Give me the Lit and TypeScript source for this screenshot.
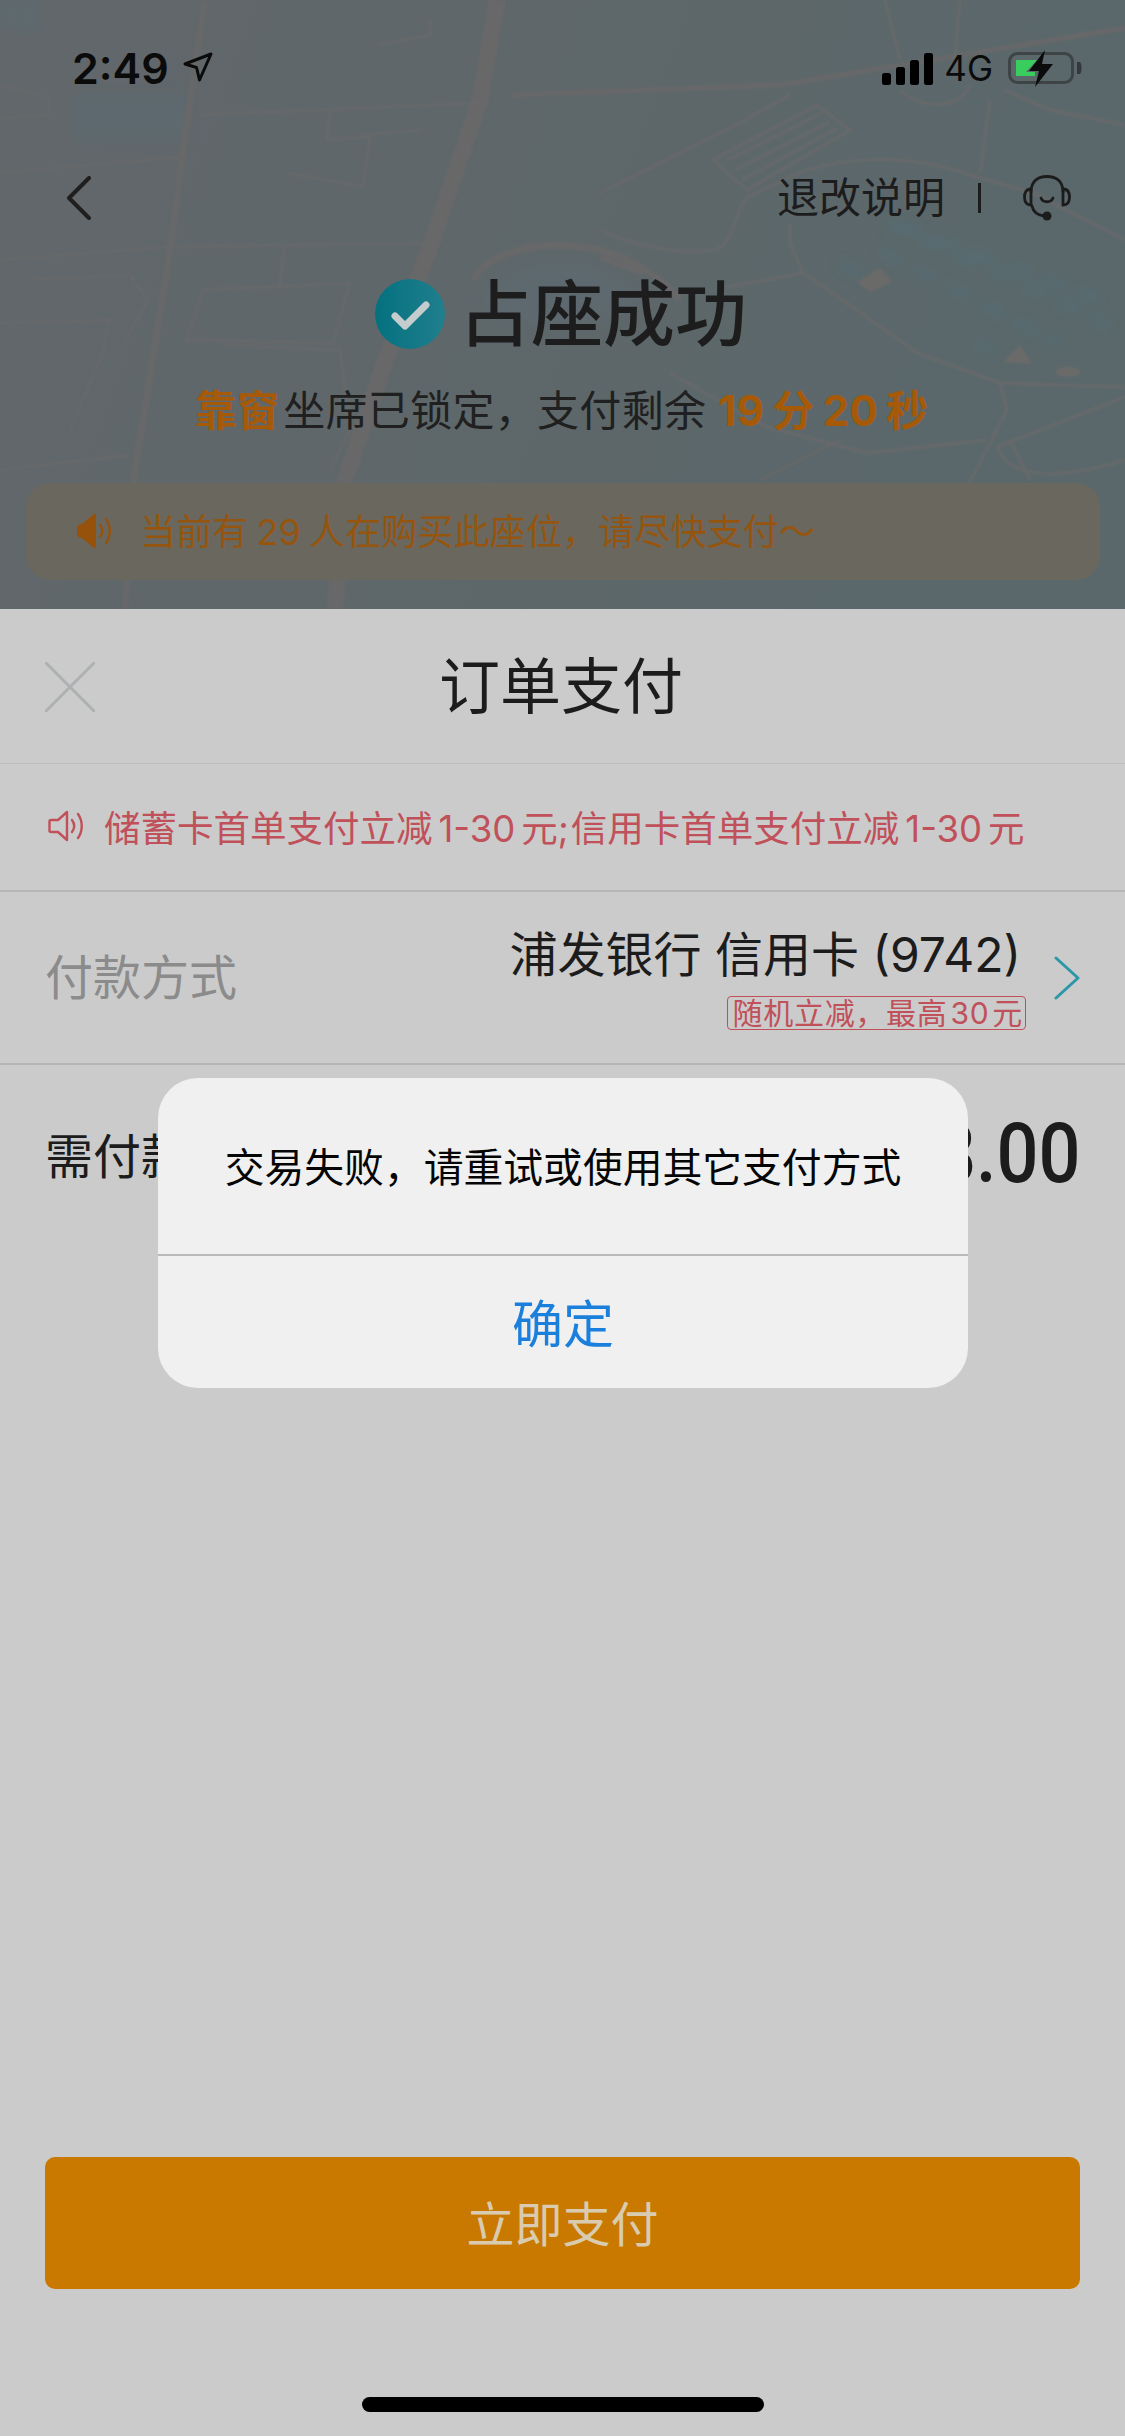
import { css, html, LitElement, svg } from "lit";
import { customElement } from "lit/decorators.js";

const mapLines = svg`
  <defs>
    <linearGradient id="land" x1="0" x2="1" y1="0" y2="0.2">
      <stop offset="0" stop-color="#62676a"/>
      <stop offset="0.55" stop-color="#5e676a"/>
      <stop offset="1" stop-color="#5a686b"/>
    </linearGradient>
    <filter id="soft"><feGaussianBlur stdDeviation="5"/></filter>
    <filter id="soft-line"><feGaussianBlur stdDeviation="0.8"/></filter>
  </defs>
  <rect width="1125" height="609" fill="url(#land)"/>
  <g filter="url(#soft)" fill="#5d696e">
    <rect x="73" y="93" width="114" height="48"/>
    <rect x="0" y="0" width="40" height="30"/>
    <path d="M480 300 C520 250 600 250 640 300 C600 330 520 340 480 300 Z"/>
  </g>
  <g filter="url(#soft)" stroke="#576d74" stroke-width="9" stroke-dasharray="26 12" fill="none" opacity="0.8">
    <path d="M885 222 L1110 325"/>
    <path d="M880 250 L1060 345"/>
    <path d="M900 225 L1100 300"/>
    <path d="M840 262 L868 282"/>
    <path d="M972 342 L1008 358"/>
  </g>
  <g filter="url(#soft-line)" fill="none">
    <g stroke="#676869">
      <path d="M497 0 L480 100 L430 247 L383 367 L345 480 L335 609" stroke-width="17"/>
      <path d="M205 0 L190 100 L170 250 L133 483 L125 609" stroke-width="6"/>
      <path d="M510 95 L780 85 L1125 28" stroke-width="5"/>
      <path d="M600 257 L643 273" stroke-width="6"/>
      <path d="M473 280 C490 250 545 238 600 250 C630 258 660 275 680 300" stroke-width="7"/>
    </g>
    <g stroke="#67696b" stroke-width="2.5">
      <path d="M0 260 L167 247 L433 243"/>
      <path d="M200 115 L480 103"/>
      <path d="M0 173 L180 157"/>
      <path d="M0 85 L50 98 L48 115 L0 118"/>
      <path d="M187 340 L203 290 L350 283 L333 343 Z"/>
      <path d="M0 323 L110 320 L100 360 L70 430"/>
      <path d="M30 280 L130 275 L148 300 L125 340"/>
      <path d="M330 110 L327 140 L370 137 L363 187 L287 173"/>
      <path d="M380 45 L430 35 L430 20"/>
      <path d="M420 130 L360 135"/>
      <path d="M0 470 L130 455"/>
      <path d="M285 245 L280 285 M225 345 L340 350 L350 430 L330 470"/>
    </g>
    <g stroke="#68696a" stroke-width="3">
      <path d="M713 160 L817 105 L850 130 L747 190 Z"/>
      <path d="M728 160 L822 113 M735 170 L830 122 M742 180 L838 128"/>
      <path d="M600 193 L740 123 L790 95"/>
      <path d="M600 230 C630 245 680 255 713 250 C735 245 735 210 747 197 L807 170 C840 160 900 150 977 177 L1033 193 L1125 240"/>
      <path d="M790 223 L790 243 L803 273 L867 317 L917 353 L1000 383 L1125 387"/>
      <path d="M727 287 L803 273"/>
      <path d="M1000 383 L1007 410 L983 457 L960 500"/>
      <path d="M670 373 L767 427 L867 453 L987 440"/>
      <path d="M997 447 L1125 397"/>
      <path d="M990 100 L980 173"/>
      <path d="M900 90 C920 110 960 110 970 85 M885 0 L900 60 M960 0 L955 60 M1005 90 L1050 110 L1125 125"/>
      <path d="M997 447 C1010 480 1060 480 1125 460"/>
      <path d="M760 480 L840 440 M1030 480 L1010 440"/>
    </g>
  </g>
  <g filter="url(#soft-line)" fill="#6a6a69">
    <path d="M857 282 L880 268 L892 282 L870 292 Z"/>
    <path d="M1003 362 L1020 345 L1032 364 Z"/>
    <ellipse cx="1068" cy="372" rx="12" ry="5"/>
  </g>`;

@customElement("app-root")
export class AppRoot extends LitElement {
  static styles = css`
    :host {
      display: flex;
      flex-direction: column;
      position: relative;
      width: 1125px;
      height: 2436px;
      overflow: hidden;
      background: #cbcbcb;
      font-family: "Inter", "Noto Sans CJK SC", sans-serif;
      color: #1f1f1f;
    }
    .top {
      position: relative;
      flex: 0 0 609px;
      height: 609px;
      box-sizing: border-box;
      padding: 0 25px 29px 26px;
      display: flex;
      flex-direction: column;
      background: #5e6669;
      overflow: hidden;
    }
    .map {
      position: absolute;
      inset: 0;
      width: 1125px;
      height: 609px;
    }
    .top > *:not(.map) {
      position: relative;
    }
    .status {
      height: 100px;
      margin: 0 -25px 0 -26px;
      padding: 38px 43px 0 72px;
      box-sizing: border-box;
      display: flex;
      justify-content: space-between;
      align-items: flex-start;
    }
    .time {
      display: flex;
      align-items: flex-start;
      gap: 14px;
      font-family: "Inter", sans-serif;
      font-weight: 600;
      font-size: 43px;
      line-height: 62px;
      color: #0b0b0b;
      margin-top: -1px;
    }
    .time svg {
      margin-top: 15px;
    }
    .sys {
      display: flex;
      align-items: flex-start;
    }
    .sys .net {
      font-family: "Inter", sans-serif;
      font-size: 35px;
      line-height: 46px;
      color: #0b0b0b;
      margin: 7px 15px 0 11px;
    }
    .nav {
      height: 74px;
      margin: 61px -25px 0 -26px;
      padding: 0 54px 0 66px;
      box-sizing: border-box;
      display: flex;
      align-items: center;
    }
    .nav .link {
      margin-left: auto;
      font-size: 42px;
      line-height: 60px;
      color: #1c1c1c;
    }
    .nav .sep {
      width: 3px;
      height: 30px;
      background: #1c1c1c;
      margin: 0 42px 0 33px;
    }
    .headline {
      display: flex;
      justify-content: center;
      align-items: center;
      gap: 14px;
      margin-top: 39px;
      height: 80px;
      padding-right: 4px;
    }
    .headline h1 {
      margin: 0;
      font-size: 72px;
      line-height: 80px;
      font-weight: 500;
      color: #1d1d1d;
    }
    .sub {
      margin-top: 28px;
      padding-left: 5px;
      text-align: center;
      font-size: 42px;
      line-height: 58px;
      letter-spacing: 0.3px;
      color: #202020;
      white-space: nowrap;
    }
    .sub b {
      color: #a65a08;
      font-weight: 700;
    }
    .sub .window {
      margin-right: 4px;
    }
    .sub .num {
      margin: 0 8px;
    }
    .notice {
      margin-top: auto;
      height: 97px;
      box-sizing: border-box;
      padding: 0 0 6px 51px;
      display: flex;
      align-items: center;
      gap: 28px;
      background: #6a675e;
      border-radius: 24px;
      color: #96550e;
      font-size: 36px;
      letter-spacing: 0.15px;
      white-space: nowrap;
    }
    .notice svg {
      margin-top: 4px;
    }
    .notice .n {
      margin: 0 8px;
    }
    .sheet {
      flex: 1;
      display: flex;
      flex-direction: column;
    }
    .sheet-head {
      position: relative;
      flex: 0 0 155px;
      box-sizing: border-box;
      display: flex;
      align-items: center;
      justify-content: center;
      border-bottom: 1px solid #bcbcbc;
    }
    .sheet-head h2 {
      margin: 0 3px 0 0;
      font-size: 61px;
      font-weight: 400;
      color: #1c1c1c;
      line-height: 80px;
      padding-top: 2px;
    }
    .close {
      position: absolute;
      left: 45px;
      top: 53px;
    }
    .promo {
      flex: 0 0 128px;
      box-sizing: border-box;
      padding: 0 0 2px 48px;
      display: flex;
      align-items: center;
      gap: 20px;
      border-bottom: 2px solid #b6b6b6;
      color: #c0505a;
      font-size: 36.5px;
      white-space: nowrap;
    }
    .promo .n {
      margin: 0 6px;
    }
    .promo .semi {
      margin-right: 2px;
    }
    .pay {
      flex: 0 0 173px;
      box-sizing: border-box;
      padding: 0 45px;
      display: flex;
      align-items: center;
      border-bottom: 2px solid #b6b6b6;
    }
    .pay .label {
      font-size: 48px;
      color: #8b8b8b;
      margin-bottom: 8px;
    }
    .card {
      margin: -4px 0 0 auto;
      display: flex;
      flex-direction: column;
      align-items: flex-end;
    }
    .card .name {
      font-size: 48px;
      line-height: 68px;
      color: #1c1c1c;
      margin: 0 5px 7px 0;
      white-space: nowrap;
    }
    .card .tag {
      border: 1.5px solid #c0505a;
      border-radius: 4px;
      color: #c0505a;
      font-size: 30px;
      line-height: 32px;
      letter-spacing: 0.7px;
      padding: 0 2px 0 5px;
      white-space: nowrap;
    }
    .card .tag span {
      margin: 0 3px;
    }
    .pay svg {
      margin-left: 28px;
    }
    .due {
      flex: 0 0 176px;
      box-sizing: border-box;
      padding: 0 44px 0 45px;
      display: flex;
      align-items: center;
      justify-content: space-between;
    }
    .due .label {
      font-size: 48px;
      color: #1c1c1c;
    }
    .due .amount {
      font-family: "Roboto", sans-serif;
      font-weight: 500;
      font-size: 84px;
      color: #1c1c1c;
      transform: scaleX(0.88);
      transform-origin: right center;
    }
    .submit {
      margin: auto 45px 0;
      height: 132px;
      flex: 0 0 132px;
      box-sizing: border-box;
      padding-bottom: 4px;
      background: #c97900;
      border-radius: 10px;
      color: #d9cbb0;
      font-size: 48px;
      display: flex;
      align-items: center;
      justify-content: center;
    }
    .home-row {
      flex: 0 0 147px;
      height: 147px;
      display: flex;
      justify-content: center;
      padding-top: 108px;
      box-sizing: border-box;
    }
    .home {
      width: 402px;
      height: 15px;
      border-radius: 8px;
      background: #000;
    }
    .dialog {
      position: absolute;
      left: 158px;
      top: 1078px;
      width: 810px;
      height: 310px;
      border-radius: 40px;
      background: #f0f0f0;
      display: flex;
      flex-direction: column;
    }
    .dialog .msg {
      flex: 0 0 178px;
      box-sizing: border-box;
      padding-bottom: 3px;
      display: flex;
      align-items: center;
      justify-content: center;
      font-size: 39.8px;
      color: #050505;
      border-bottom: 2px solid #b9b9b9;
      white-space: nowrap;
    }
    .dialog .ok {
      flex: 1;
      box-sizing: border-box;
      padding-bottom: 2px;
      display: flex;
      align-items: center;
      justify-content: center;
      font-size: 51px;
      color: #1b7fdc;
    }
  `;

  render() {
    return html`
      <section class="top">
        <svg class="map" viewBox="0 0 1125 609">${mapLines}</svg>
        <div class="status">
          <div class="time">
            2:49
            <svg width="30" height="31" viewBox="0 0 30 31">
              <path d="M28 2 L2 12 L13.5 15.5 L16.5 28 Z" fill="none" stroke="#0b0b0b" stroke-width="3" stroke-linejoin="round"/>
            </svg>
          </div>
          <div class="sys">
            <svg width="51" height="32" viewBox="0 0 51 32" style="margin-top:15px">
              <g fill="#000">
                <rect x="0" y="20" width="9" height="12" rx="2.5"/>
                <rect x="14" y="14" width="9" height="18" rx="2.5"/>
                <rect x="28" y="7" width="9" height="25" rx="2.5"/>
                <rect x="42" y="0" width="9" height="32" rx="2.5"/>
              </g>
            </svg>
            <span class="net">4G</span>
            <svg width="74" height="38" viewBox="0 0 74 38" style="margin-top:12px">
              <rect x="1.5" y="3.5" width="63" height="29" rx="8" fill="none" stroke="#3e4345" stroke-width="3"/>
              <path d="M72 12 C74 14 74 22 72 24 L69 24 L69 12 Z" fill="#33383a"/>
              <path d="M8 10 H29 L18 22 H27 V26 H8 Z" fill="#38cd5c"/>
              <path d="M37 0 L21 21 H31 L27 37 L45 14 H34 Z" fill="#0b0b0b"/>
            </svg>
          </div>
        </div>
        <div class="nav">
          <svg width="26" height="44" viewBox="0 0 26 44">
            <path d="M23 2 L3 22 L23 42" fill="none" stroke="#1f1f1f" stroke-width="4" stroke-linecap="round" stroke-linejoin="round"/>
          </svg>
          <span class="link">退改说明</span>
          <span class="sep"></span>
          <svg width="48" height="46" viewBox="0 0 48 46">
            <g fill="none" stroke="#1c1c1c" stroke-width="2.8" stroke-linecap="round">
              <path d="M8 17 C8 6 15 1.5 24 1.5 C33 1.5 40 6 40 17"/>
              <path d="M8 14 C3 14 1.5 18 1.5 22 C1.5 26 3 30 8 30 Z"/>
              <path d="M40 14 C45 14 46.5 18 46.5 22 C46.5 26 45 30 40 30 Z"/>
              <path d="M18 23 C20 28 28 28 30 23"/>
              <path d="M9 31 C10 36 14 40 21 41"/>
            </g>
            <circle cx="24" cy="41" r="4.5" fill="#1c1c1c"/>
          </svg>
        </div>
        <div class="headline">
          <svg width="70" height="70" viewBox="0 0 70 70">
            <defs>
              <linearGradient id="tick" x1="0" x2="1" y1="0" y2="0">
                <stop offset="0" stop-color="#04717f"/>
                <stop offset="1" stop-color="#207f8d"/>
              </linearGradient>
            </defs>
            <circle cx="35" cy="35" r="35" fill="url(#tick)"/>
            <path d="M20 37 L30 47 L51 26" fill="none" stroke="#c4cccd" stroke-width="7" stroke-linecap="round" stroke-linejoin="round"/>
          </svg>
          <h1>占座成功</h1>
        </div>
        <div class="sub">
          <b class="window">靠窗</b>坐席已锁定，支付剩余
          <b>19<span class="num">分</span>20<span class="num">秒</span></b>
        </div>
        <div class="notice">
          <svg width="35" height="34" viewBox="0 0 35 34">
            <path d="M0 14 C0 12 2 10 5 10 L17 0 L19 0 L19 34 L17 34 L5 24 C2 24 0 22 0 20 Z" fill="#96520a"/>
            <path d="M23 11 C26 14 26 20 23 23 M29 5 C34 12 34 22 29 29" fill="none" stroke="#96520a" stroke-width="2.4" stroke-linecap="round"/>
          </svg>
          <span>当前有<span class="n">29</span>人在购买此座位，请尽快支付～</span>
        </div>
      </section>
      <section class="sheet">
        <header class="sheet-head">
          <svg class="close" width="50" height="50" viewBox="0 0 50 50">
            <path d="M1 1 L49 49 M49 1 L1 49" stroke="#aeb1b2" stroke-width="3" stroke-linecap="round"/>
          </svg>
          <h2>订单支付</h2>
        </header>
        <div class="promo">
          <svg width="36" height="32" viewBox="0 0 36 32">
            <path d="M1.5 11 C1.5 10 2.5 10 4 10 L10 10 L19 2 L19 30 L10 22 L4 22 C2.5 22 1.5 22 1.5 21 Z" fill="none" stroke="#c0505a" stroke-width="2.4" stroke-linejoin="round"/>
            <path d="M24 10 C27 14 27 18 24 22 M30 4 C35 11 35 21 30 28" fill="none" stroke="#c0505a" stroke-width="2.4" stroke-linecap="round"/>
          </svg>
          <span>储蓄卡首单支付立减<span class="n">1-30</span>元<span class="semi">;</span>信用卡首单支付立减<span class="n">1-30</span>元</span>
        </div>
        <div class="pay">
          <span class="label">付款方式</span>
          <div class="card">
            <span class="name">浦发银行 信用卡 (9742)</span>
            <span class="tag">随机立减，最高<span>30</span>元</span>
          </div>
          <svg width="26" height="44" viewBox="0 0 26 44">
            <path d="M2 2 L24 22 L2 42" fill="none" stroke="#2b97a8" stroke-width="3" stroke-linecap="round" stroke-linejoin="round"/>
          </svg>
        </div>
        <div class="due">
          <span class="label">需付款</span>
          <span class="amount">8.00</span>
        </div>
        <div class="submit">立即支付</div>
        <div class="home-row"><div class="home"></div></div>
      </section>
      <div class="dialog">
        <div class="msg">交易失败，请重试或使用其它支付方式</div>
        <div class="ok">确定</div>
      </div>
    `;
  }
}
